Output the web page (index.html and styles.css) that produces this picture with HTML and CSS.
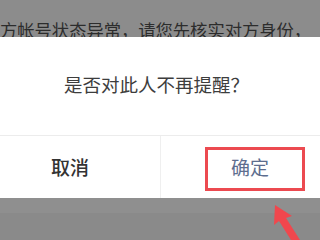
FILE: index.html
```html
<!DOCTYPE html>
<html lang="zh-CN">
<head>
<meta charset="utf-8">
<link rel="stylesheet" href="styles.css">
</head>
<body>
<div class="screen">
  <div class="behind">方帐号状态异常，请您先核实对方身份，</div>
  <div class="dialog">
    <div class="message">是否对此人不再提醒？</div>
    <div class="actions">
      <div class="btn cancel">取消</div>
      <div class="btn ok">确定</div>
    </div>
  </div>
  <div class="below"></div>
  <div class="highlight"></div>
  <svg class="arrow" width="320" height="240" viewBox="0 0 320 240">
    <path d="M275 205 L292 216 L286 218 L300 240 L291 240 L279 221 L274 225 Z" fill="#f0474d"/>
  </svg>
</div>
</body>
</html>
```
FILE: styles.css
```css
html, body {
  margin: 0;
  padding: 0;
}
body {
  width: 320px;
  height: 240px;
  overflow: hidden;
  background: #8c8c8c;
  font-family: "Noto Sans CJK SC", "Noto Sans", sans-serif;
}
.screen {
  position: relative;
  width: 320px;
  height: 240px;
  display: flex;
  flex-direction: column;
}
.behind {
  height: 37px;
  box-sizing: border-box;
  padding-top: 20px;
  padding-left: 0;
  font-size: 17.3px;
  line-height: 20px;
  color: #2c2c2c;
  white-space: nowrap;
  overflow: hidden;
  letter-spacing: 0;
}
.dialog {
  height: 161px;
  background: #ffffff;
  display: flex;
  flex-direction: column;
}
.message {
  height: 99px;
  display: flex;
  align-items: center;
  justify-content: center;
  padding-right: 7px;
  padding-bottom: 4px;
  box-sizing: border-box;
  font-size: 18.5px;
  color: #3d3d3d;
  border-bottom: 1px solid #ececec;
}
.actions {
  flex: 1;
  display: flex;
}
.btn {
  flex: 1;
  display: flex;
  align-items: center;
  justify-content: center;
  font-size: 19px;
  padding-bottom: 2px;
}
.cancel {
  color: #333333;
  font-weight: 500;
  padding-right: 20px;
  border-right: 1px solid #efefef;
}
.ok {
  color: #5d6d8e;
  padding-left: 19px;
}
.below {
  flex: 1;
  border-top: 15px solid #8f8f8f;
  background: #8a8a8a;
}
.highlight {
  position: absolute;
  left: 205px;
  top: 147px;
  width: 100px;
  height: 44px;
  box-sizing: border-box;
  border: 3px solid #ec4a50;
}
.arrow {
  position: absolute;
  left: 0;
  top: 0;
}
```
